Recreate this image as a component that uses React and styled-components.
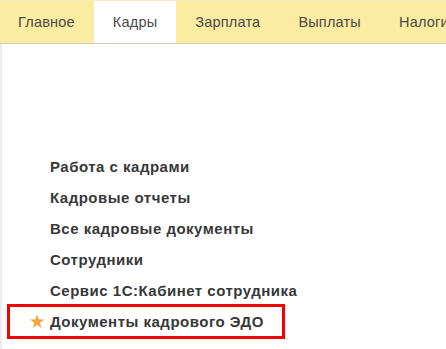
import React from 'react';
import styled, { createGlobalStyle } from 'styled-components';

const tabs = ['Главное', 'Кадры', 'Зарплата', 'Выплаты', 'Налоги и взносы'];

const links = [
  'Работа с кадрами',
  'Кадровые отчеты',
  'Все кадровые документы',
  'Сотрудники',
  'Сервис 1С:Кабинет сотрудника',
];

const GlobalStyle = createGlobalStyle`
  html, body {
    margin: 0;
    padding: 0;
    background: #ffffff;
    overflow: hidden;
  }
  body {
    font-family: Arial, 'Liberation Sans', sans-serif;
  }
`;

const Page = styled.div`
  width: 446px;
  height: 349px;
  display: flex;
  flex-direction: column;
`;

const TabBar = styled.div`
  display: flex;
  height: 42px;
  background: #fbeca2;
  border-top: 1px solid #f6ecc2;
  border-bottom: 1px solid #cfcabb;
  white-space: nowrap;
  overflow: hidden;
`;

const Tab = styled.div`
  display: flex;
  align-items: center;
  flex-shrink: 0;
  padding: 0 19px 0 ${p => (p.$first ? 18 : 19)}px;
  font-size: 14.5px;
  letter-spacing: 0.2px;
  color: #4a4a4a;
  background: ${p => (p.$active ? '#ffffff' : 'transparent')};
`;

const Content = styled.div`
  flex: 1;
  border-left: 2px solid #ececec;
  padding: 107px 0 0 48px;
`;

const LinkList = styled.ul`
  list-style: none;
  margin: 0;
  padding: 0;
`;

const LinkItem = styled.li`
  font-size: 15px;
  font-weight: bold;
  letter-spacing: 0.5px;
  line-height: 31px;
  color: #383838;
  white-space: nowrap;
`;

const Highlight = styled.li`
  box-sizing: border-box;
  display: flex;
  align-items: center;
  gap: 5px;
  width: 278px;
  height: 35px;
  margin: -2px 0 0 -43px;
  padding-left: 20px;
  border: 3px solid #f50000;
  font-size: 15px;
  font-weight: bold;
  letter-spacing: 0.5px;
  color: #383838;
  white-space: nowrap;
`;

const Star = styled.span`
  width: 15px;
  color: #efa73a;
  font-size: 16px;
  line-height: 1;
`;

export default function App() {
  return (
    <Page>
      <GlobalStyle />
      <TabBar>
        {tabs.map((t, i) => (
          <Tab key={t} $first={i === 0} $active={t === 'Кадры'}>
            {t}
          </Tab>
        ))}
      </TabBar>
      <Content>
        <LinkList>
          {links.map(l => (
            <LinkItem key={l}>{l}</LinkItem>
          ))}
          <Highlight>
            <Star>★</Star>
            Документы кадрового ЭДО
          </Highlight>
        </LinkList>
      </Content>
    </Page>
  );
}
